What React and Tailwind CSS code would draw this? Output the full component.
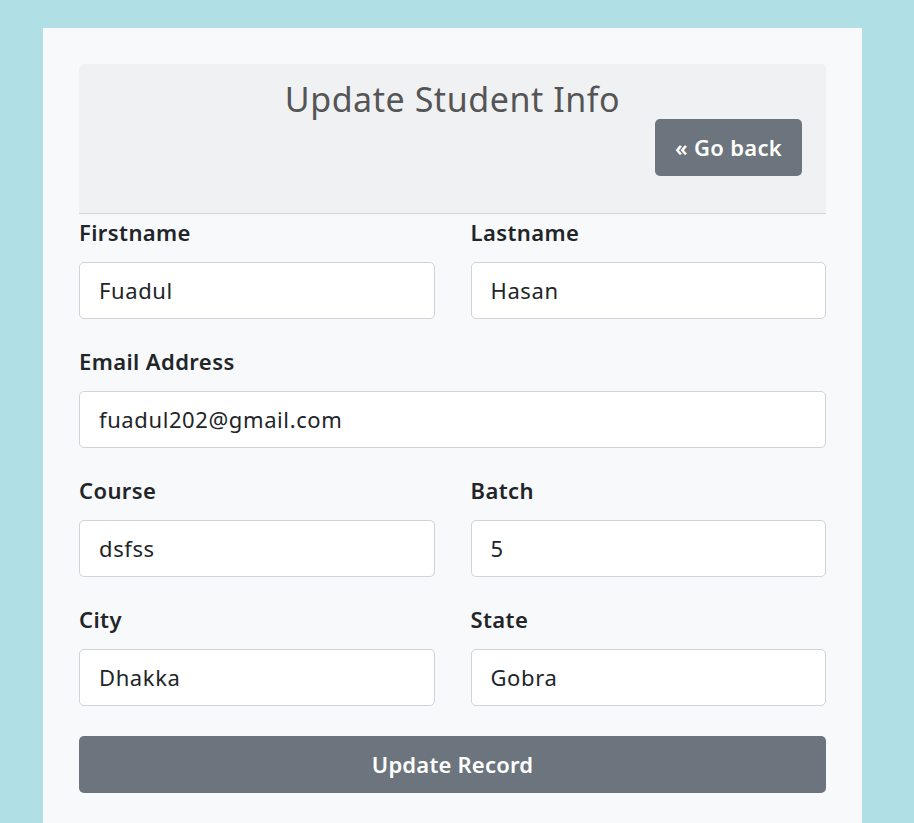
import React, { useState } from 'react';

const Field = ({ label, value, onChange, type = 'text' }) => (
  <div className="mb-[28px]">
    <label className="block text-[22px] leading-[28px] tracking-[0.4px] font-semibold text-[#212529] mb-[16px]">{label}</label>
    <input
      type={type}
      value={value}
      onChange={onChange}
      className="w-full h-[57px] px-[19px] pb-[2px] bg-white border border-[#ced4da] rounded-[5px] text-[22px] tracking-[0.6px] text-[#212529] focus:outline-none"
    />
  </div>
);

const App = () => {
  const [form, setForm] = useState({
    firstname: 'Fuadul',
    lastname: 'Hasan',
    email: 'fuadul202@gmail.com',
    course: 'dsfss',
    batch: '5',
    city: 'Dhakka',
    state: 'Gobra',
  });

  const set = (name) => (e) => setForm({ ...form, [name]: e.target.value });

  return (
    <div className="min-h-screen bg-[#b0dfe5] pt-[28px] px-[43px] overflow-hidden" style={{ fontFamily: '"Noto Sans", "Open Sans", sans-serif' }}>
      <div className="w-[819px] bg-[#f8f9fa] px-[36px] pt-[36px] pb-[40px] min-h-[800px]">
        <div className="bg-[#f0f1f3] rounded-t-[5px] border-b border-[#d3d4d6] pt-[15px] pb-[37px] px-[24px]">
          <h1 className="text-center text-[34px] leading-[40px] tracking-[0.55px] font-normal text-[#555555]">Update Student Info</h1>
          <div className="flex justify-end">
            <button className="h-[57px] px-[20px] bg-[#6c757d] text-white text-[22px] tracking-[0.3px] font-semibold rounded-[5px]">« Go back</button>
          </div>
        </div>

        <form onSubmit={(e) => e.preventDefault()} className="mt-[4px]">
          <div className="grid grid-cols-2 gap-x-[36px]">
            <Field label="Firstname" value={form.firstname} onChange={set('firstname')} />
            <Field label="Lastname" value={form.lastname} onChange={set('lastname')} />
          </div>
          <Field label="Email Address" type="email" value={form.email} onChange={set('email')} />
          <div className="grid grid-cols-2 gap-x-[36px]">
            <Field label="Course" value={form.course} onChange={set('course')} />
            <Field label="Batch" value={form.batch} onChange={set('batch')} />
          </div>
          <div className="grid grid-cols-2 gap-x-[36px]">
            <Field label="City" value={form.city} onChange={set('city')} />
            <Field label="State" value={form.state} onChange={set('state')} />
          </div>
          <button type="submit" className="mt-[2px] w-full h-[57px] bg-[#6c757d] text-white text-[22px] tracking-[0.2px] font-semibold rounded-[5px]">Update Record</button>
        </form>
      </div>
    </div>
  );
};

export default App;
